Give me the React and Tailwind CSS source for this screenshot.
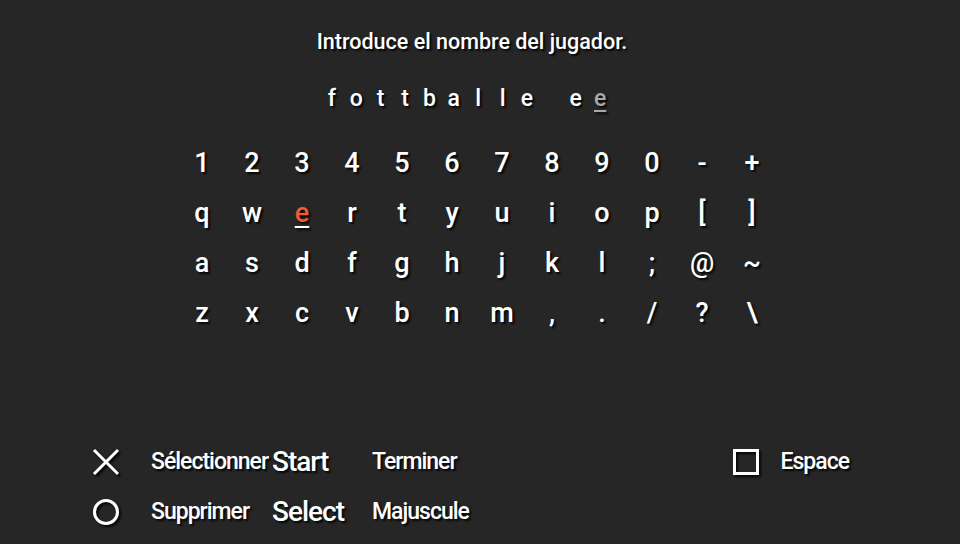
import React from 'react';

const rows = [
    ['1', '2', '3', '4', '5', '6', '7', '8', '9', '0', '-', '+'],
    ['q', 'w', 'e', 'r', 't', 'y', 'u', 'i', 'o', 'p', '[', ']'],
    ['a', 's', 'd', 'f', 'g', 'h', 'j', 'k', 'l', ';', '@', '~'],
    ['z', 'x', 'c', 'v', 'b', 'n', 'm', ',', '.', '/', '?', '\\'],
];

const name = ['f', 'o', 't', 't', 'b', 'a', 'l', 'l', 'e', ' ', 'e'];

const shadow = '[text-shadow:2px_2px_2px_rgba(0,0,0,0.85)]';
const iconShadow = '[filter:drop-shadow(2px_2px_1px_rgba(0,0,0,0.85))]';

export default function App() {
    return (
        <div
            className={`w-[960px] h-[544px] bg-[#262626] text-white font-medium overflow-hidden flex flex-col items-center ${shadow}`}
            style={{ fontFamily: 'Roboto, "Noto Sans", sans-serif' }}
        >
            <div className="mt-[27px] mr-[16px] h-[30px] text-[21.5px] leading-[30px]">Introduce el nombre del jugador.</div>

            {/* current name */}
            <div className="mt-[27px] mr-[28px] flex h-[30px] items-center text-[23px] leading-[30px]">
                {name.map((c, i) => (
                    <span key={i} className="w-[24.4px] text-center">{c === ' ' ? '\u00a0' : c}</span>
                ))}
                <span className="w-[24.4px] text-center text-[#a8a8a8] underline underline-offset-4">e</span>
            </div>

            {/* keyboard */}
            <div className="mt-[24px] mr-[6px] grid grid-cols-12 w-[600px] text-[27px]">
                {rows.flat().map((k, i) => (
                    <div key={i} className="h-[50px] flex items-center justify-center">
                        {k === 'e' ? (
                            <span className="text-[#f25a30] underline decoration-white underline-offset-4">e</span>
                        ) : (
                            k
                        )}
                    </div>
                ))}
            </div>

            {/* button hints */}
            <div className="mt-[99px] w-full flex pl-[92px] pr-[111px] text-[23px] tracking-[-1px] whitespace-nowrap">
                <div className="flex flex-col w-[28px]">
                    <div className="h-[50px] flex items-center">
                        <svg width="28" height="28" viewBox="0 0 28 28" className={iconShadow}>
                            <path d="M2 2L26 26M26 2L2 26" stroke="white" strokeWidth="3" fill="none" />
                        </svg>
                    </div>
                    <div className="h-[50px] flex items-center">
                        <svg width="28" height="28" viewBox="0 0 28 28" className={iconShadow}>
                            <circle cx="14" cy="14" r="11.5" stroke="white" strokeWidth="3" fill="none" />
                        </svg>
                    </div>
                </div>
                <div className="ml-[31px] w-[221px] grid grid-cols-[121px_1fr]">
                    <div className="h-[50px] flex items-center">Sélectionner</div>
                    <div className="h-[50px] flex items-center text-[28px]">Start</div>
                    <div className="h-[50px] flex items-center">Supprimer</div>
                    <div className="h-[50px] flex items-center text-[28px]">Select</div>
                </div>
                <div className="flex flex-col">
                    <div className="h-[50px] flex items-center">Terminer</div>
                    <div className="h-[50px] flex items-center">Majuscule</div>
                </div>
                <div className="ml-auto flex h-[50px] items-center">
                    <div className={`w-[26px] h-[26px] border-[3px] border-white ${iconShadow}`} />
                    <span className="ml-[22px]">Espace</span>
                </div>
            </div>
        </div>
    );
}
